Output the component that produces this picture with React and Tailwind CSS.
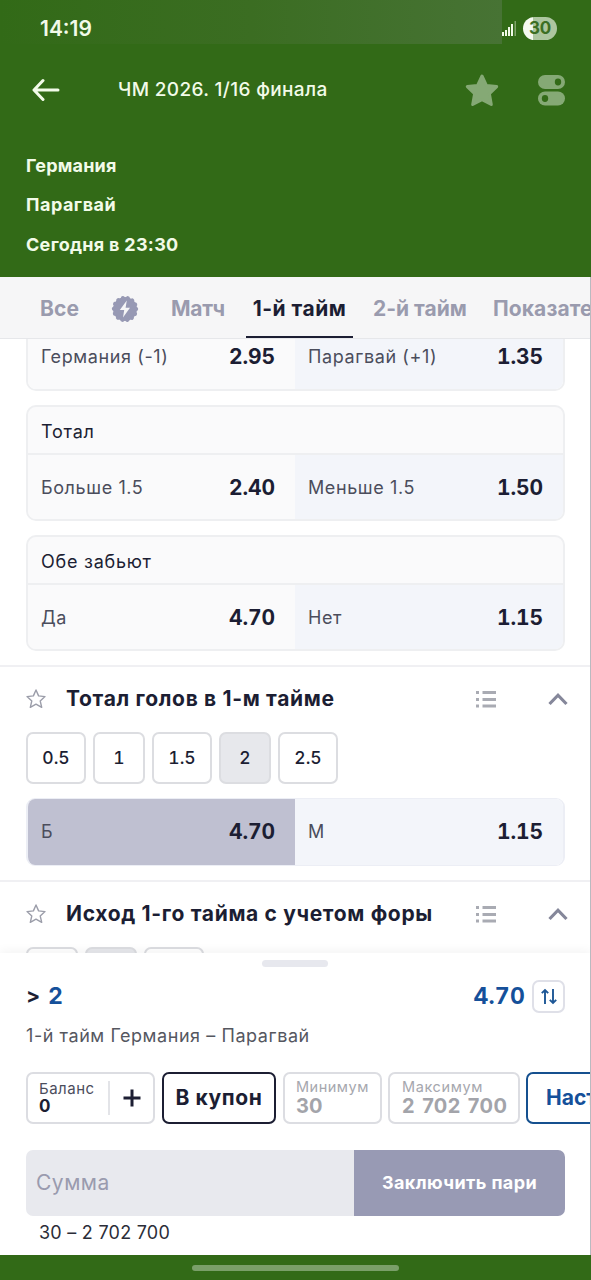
import React from 'react';

const tabs = [
  { label: 'Все', className: 'ml-10 w-[40px] tracking-[0.1px]' },
  { icon: true, className: 'ml-[31px] w-[28px]' },
  { label: 'Матч', className: 'ml-[32px] w-[55px] tracking-[-0.2px]' },
  { label: '1-й тайм', active: true, className: 'ml-5 w-[107px] justify-center tracking-[0.5px]' },
  { label: '2-й тайм', className: 'ml-5 w-[95px]' },
  { label: 'Показатели', className: 'ml-[25px] tracking-[0.1px]' },
];

const markets = [
  { title: 'Тотал', left: ['Больше 1.5', '2.40'], right: ['Меньше 1.5', '1.50'] },
  { title: 'Обе забьют', left: ['Да', '4.70'], right: ['Нет', '1.15'] },
];

function StatusBar() {
  return (
    <div className="relative h-11 shrink-0">
      <div className="absolute left-0 top-0 h-11 w-[502px] bg-linear-to-r from-[#326a17] via-[#3b6d22] to-[#477334]" />
      <div className="relative flex h-full items-center pt-3 pl-10 pr-[34px]">
        <span className="text-[21px] font-semibold leading-none text-[#f2fbe9]">14:19</span>
        <svg className="ml-auto" width="15" height="15" viewBox="0 0 15 15" fill="#f2fbe9">
          <rect x="0" y="11" width="2" height="4" />
          <rect x="3" y="9" width="2" height="6" />
          <rect x="6" y="6" width="2" height="9" />
          <rect x="9" y="3" width="2" height="12" />
          <rect x="12.5" y="0" width="1.5" height="15" opacity="0.4" />
        </svg>
        <div className="ml-1.5 flex h-[23px] w-[34px] items-center justify-center rounded-full bg-linear-to-r from-[#f4f9f0] from-30% to-[#adc6a0] to-30% text-[17px] font-bold leading-none tracking-[-0.2px] text-[#3c6f24]">
          30
        </div>
      </div>
    </div>
  );
}

function Header() {
  return (
    <header className="flex h-[277px] shrink-0 flex-col bg-[#326a17]">
      <StatusBar />
      <div className="flex h-[92px] shrink-0 items-center pl-8 pr-[26px]">
        <svg width="28" height="24" viewBox="0 0 28 24" fill="none" stroke="#f2fbe9" strokeWidth="3" strokeLinecap="round" strokeLinejoin="round">
          <path d="M26 12H2.500M11 2.500 2 12l9 9.500" />
        </svg>
        <span className="ml-[58px] pt-px text-[19px] font-medium tracking-[0.35px] text-[#f2fbe9]">ЧМ 2026. 1/16 финала</span>
        <svg className="ml-auto" width="34" height="33" viewBox="0 0 34 33" fill="#85a975" stroke="#85a975" strokeWidth="3" strokeLinejoin="round">
          <path d="M17 2l4.400 9.400 10.300 1.200-7.300 7.200 1.900 10.700-9.300-4.800-9.300 4.800 1.900-10.700-7.300-7.200 10.300-1.200z" />
        </svg>
        <svg className="ml-[39px]" width="27" height="31" viewBox="0 0 27 31">
          <rect x="0" y="0" width="27" height="14" rx="7" fill="#85a975" />
          <ellipse cx="20" cy="7" rx="3.2" ry="3.4" fill="#326a17" />
          <rect x="0" y="16.5" width="27" height="14" rx="7" fill="#85a975" />
          <ellipse cx="7" cy="23.5" rx="3.2" ry="3.4" fill="#326a17" />
        </svg>
      </div>
      <div className="flex flex-col pl-[26px] pt-2.5 text-[18px] font-bold leading-[39.3px] tracking-[0.2px] text-[#f2fbe9]">
        <span>Германия</span>
        <span className="tracking-[0.5px]">Парагвай</span>
        <span className="tracking-[0.3px]">Сегодня в 23:30</span>
      </div>
    </header>
  );
}

function BoltBadge() {
  return (
    <svg width="28" height="28" viewBox="0 0 28 28">
      <circle cx="14" cy="14" r="12" fill="#9799b4" />
      <circle cx="14" cy="14" r="11.2" fill="none" stroke="#9799b4" strokeWidth="4" strokeDasharray="0.01 5.0165" strokeLinecap="round" />
      <path d="M15.800 5.500 8.800 15h4.400l-1.200 7.500L19 12.800h-4.400z" fill="#f6f6f7" />
    </svg>
  );
}

function Tabs() {
  return (
    <nav className="flex h-[62px] shrink-0 overflow-hidden border-b border-[#e6e7ea] bg-[#f6f6f7]">
      {tabs.map((tab, i) => (
        <div
          key={i}
          className={`flex shrink-0 items-center whitespace-nowrap border-b-2 pt-1 text-[21px] font-bold ${tab.className} ${
            tab.active ? 'border-[#1c1e33] text-[#1c1e33]' : 'border-transparent text-[#9a9bae]'
          }`}
        >
          {tab.icon ? <BoltBadge /> : tab.label}
        </div>
      ))}
    </nav>
  );
}

function Odd({ name, value, className }) {
  return (
    <div className={`flex items-center justify-between pb-px pl-[13px] ${className}`}>
      <span className="text-[18px] tracking-[0.6px] text-[#4b4d5c]">{name}</span>
      <span className="text-[21px] font-bold tabular-nums tracking-[-0.1px] text-[#1c1e33]">{value}</span>
    </div>
  );
}

function OddsRow({ left, right, selected }) {
  return (
    <div className="flex h-[66px]">
      <Odd name={left[0]} value={left[1]} className={`w-[267px] shrink-0 pr-5 ${selected ? 'bg-[#bfc0d1]' : 'bg-[#fafafb]'}`} />
      <Odd name={right[0]} value={right[1]} className="flex-1 bg-[#f3f5fa] pr-5" />
    </div>
  );
}

function MarketCard({ title, left, right }) {
  return (
    <div className="h-[116px] overflow-hidden rounded-[10px] border-2 border-[#eeeff1] bg-[#fafafb]">
      <div className="flex h-12 items-center border-b-2 border-[#eeeff1] pl-[13px] pt-0.5 text-[18px] tracking-[0.75px] text-[#1c1e33]">{title}</div>
      <OddsRow left={left} right={right} />
    </div>
  );
}

function SectionHeader({ title }) {
  return (
    <div className="flex h-[67px] items-center border-t-2 border-[#f0f0f3] pl-[26px] pr-[23px]">
      <svg className="-mt-0.5" width="20" height="20" viewBox="0 0 20 20" fill="none" stroke="#9b9da9" strokeWidth="1.4" strokeLinejoin="round">
        <path d="M10 1l2.600 5.900 6.400.7-4.800 4.300 1.500 6.400L10 15.100l-5.700 3.200 1.500-6.400L1 7.600l6.400-.7z" />
      </svg>
      <h2 className="ml-5 whitespace-nowrap pb-0.5 text-[21px] font-bold tracking-[0.67px] text-[#1c1e33]">{title}</h2>
      <svg className="-mt-px ml-auto" width="20" height="17" viewBox="0 0 20 17" fill="#a9abb3">
        <path d="M0 0h3v3H0zM6.500 0H20v3H6.500zM0 7h3v3H0zM6.500 7H20v3H6.500zM0 13.500h3v3H0zM6.500 13.500H20v3H6.500z" />
      </svg>
      <svg className="-mt-0.5 ml-[52px]" width="20" height="14" viewBox="0 0 20 14" fill="none" stroke="#85879a" strokeWidth="3.2">
        <path d="M1.500 12 10 3.200 18.500 12" />
      </svg>
    </div>
  );
}

function Chip({ label, wide, active }) {
  return (
    <div
      className={`flex h-[52px] shrink-0 items-center justify-center rounded-[7px] border-2 border-[#dcdde1] text-[17.500px] font-medium tabular-nums text-[#1c1e33] ${
        wide ? 'w-[60px]' : 'w-[52px]'
      } ${active ? 'bg-[#e7e8ec]' : 'bg-white'}`}
    >
      {label}
    </div>
  );
}

function BetSlip() {
  return (
    <section className="relative flex h-[302px] shrink-0 flex-col bg-white shadow-[0_-2px_10px_rgba(0,0,0,0.05)]">
      <div className="ml-[262px] mt-[7px] h-[7px] w-[66px] rounded-full bg-[#e7e8ee]" />
      <div className="mt-3 flex h-[34px] items-center pl-[26px] pr-[26px] text-[23px] font-bold text-[#15509a]">
        <span className="text-[21px] text-[#1c1e33]">&gt;</span>
        <span className="ml-2">2</span>
        <span className="ml-auto tabular-nums tracking-[0.2px]">4.70</span>
        <div className="ml-[7px] flex size-[33px] items-center justify-center rounded-[7px] border-2 border-[#dfe0e8]">
          <svg width="16" height="17" viewBox="0 0 16 17" fill="none" stroke="#1d5796" strokeWidth="1.9">
            <path d="M4 16V2M.8 5.200 4 2l3.200 3.200M12 1v14M8.800 11.800 12 15l3.200-3.200" />
          </svg>
        </div>
      </div>
      <div className="mt-2 pl-[26px] text-[18px] leading-[30px] tracking-[0.56px] text-[#55575f]">1-й тайм Германия – Парагвай</div>
      <div className="mt-[21px] flex h-[52px] gap-[7px] overflow-hidden pl-[26px]">
        <div className="flex w-[129px] shrink-0 items-center rounded-[7px] border-2 border-[#dcdde2] pl-[11px]">
          <div className="-mt-px flex w-[69px] flex-col">
            <span className="text-[15px] leading-[17px] tracking-[0.5px] text-[#4b4d5c]">Баланс</span>
            <span className="text-[17px] font-bold leading-[19px] text-[#1c1e33]">0</span>
          </div>
          <div className="h-[34px] w-0.5 bg-[#e3e4e8]" />
          <svg className="ml-[13px]" width="18" height="18" viewBox="0 0 18 18" stroke="#1c1e33" strokeWidth="3">
            <path d="M9 .5v17M.5 9h17" />
          </svg>
        </div>
        <div className="flex w-[114px] shrink-0 items-center justify-center rounded-[7px] border-2 border-[#1c1e33] text-[21px] font-bold tracking-[0.6px] text-[#1c1e33]">В купон</div>
        <div className="flex w-[99px] shrink-0 flex-col justify-center rounded-[7px] border-2 border-[#dcdde2] pb-0.5 pl-[11px]">
          <span className="text-[14.500px] leading-[17px] tracking-[0.5px] text-[#a6a7ae]">Минимум</span>
          <span className="text-[20px] font-bold leading-[22px] text-[#a3a4aa]">30</span>
        </div>
        <div className="-ml-px flex w-[132px] shrink-0 flex-col justify-center rounded-[7px] border-2 border-[#dcdde2] pb-0.5 pl-3">
          <span className="text-[14.500px] leading-[17px] tracking-[0.6px] text-[#a6a7ae]">Максимум</span>
          <span className="text-[20px] font-bold leading-[22px] tracking-[0.4px] text-[#a3a4aa] [word-spacing:2px]">2 702 700</span>
        </div>
        <div className="-ml-px flex w-[150px] shrink-0 items-center rounded-[7px] border-2 border-[#15508f] pl-[18px] text-[21px] font-bold text-[#15509a]">Настройки</div>
      </div>
      <div className="mt-[26px] flex h-[66px] pl-[26px] pr-[26px]">
        <div className="flex w-[328px] items-center rounded-l-[7px] bg-[#e8e9ee] pl-[10px] text-[21px] tracking-[0.5px] text-[#9a9bae]">Сумма</div>
        <div className="flex flex-1 items-center justify-center rounded-r-[7px] bg-[#989ab4] pb-0.5 text-[18px] font-bold tracking-[0.4px] text-white">Заключить пари</div>
      </div>
      <div className="pl-[39px] pt-px text-[18px] leading-8 tracking-[0.25px] text-[#2b2d38]">30 – 2 702 700</div>
    </section>
  );
}

export default function App() {
  return (
    <div className="relative flex h-[1280px] w-[591px] flex-col overflow-hidden bg-white font-['Inter',sans-serif]">
      <Header />
      <Tabs />
      <main className="flex h-[614px] shrink-0 flex-col overflow-hidden">
        <div className="mx-[26px] mb-3.5 h-[52px] shrink-0 overflow-hidden rounded-b-[10px] border-2 border-t-0 border-[#eeeff1]">
          <div className="-mt-[15px]">
            <OddsRow left={['Германия (-1)', '2.95']} right={['Парагвай (+1)', '1.35']} />
          </div>
        </div>
        <div className="mx-[26px] flex shrink-0 flex-col gap-3.5">
          {markets.map((market) => (
            <MarketCard key={market.title} {...market} />
          ))}
        </div>
        <div className="mt-3.5 shrink-0">
          <SectionHeader title="Тотал голов в 1-м тайме" />
          <div className="flex gap-[7px] pl-[26px]">
            <Chip label="0.5" wide />
            <Chip label="1" />
            <Chip label="1.5" wide />
            <Chip label="2" active />
            <Chip label="2.5" wide />
          </div>
          <div className="mx-[26px] mt-3.5 h-[68px] overflow-hidden rounded-[9px] border border-x-2 border-[#eceef5]">
            <OddsRow left={['Б', '4.70']} right={['М', '1.15']} selected />
          </div>
        </div>
        <div className="mt-3.5 shrink-0">
          <SectionHeader title="Исход 1-го тайма с учетом форы" />
          <div className="flex gap-[7px] pl-[26px]">
            <Chip />
            <Chip active />
            <Chip wide />
          </div>
        </div>
      </main>
      <BetSlip />
      <footer className="flex flex-1 items-center justify-center bg-[#326a17]">
        <div className="h-1.5 w-[207px] rounded-full bg-[#7a9f69]" />
      </footer>
      {/* screen edge */}
      <div className="absolute bottom-[25px] right-0 top-[277px] w-px bg-[#b9bac0]" />
    </div>
  );
}
